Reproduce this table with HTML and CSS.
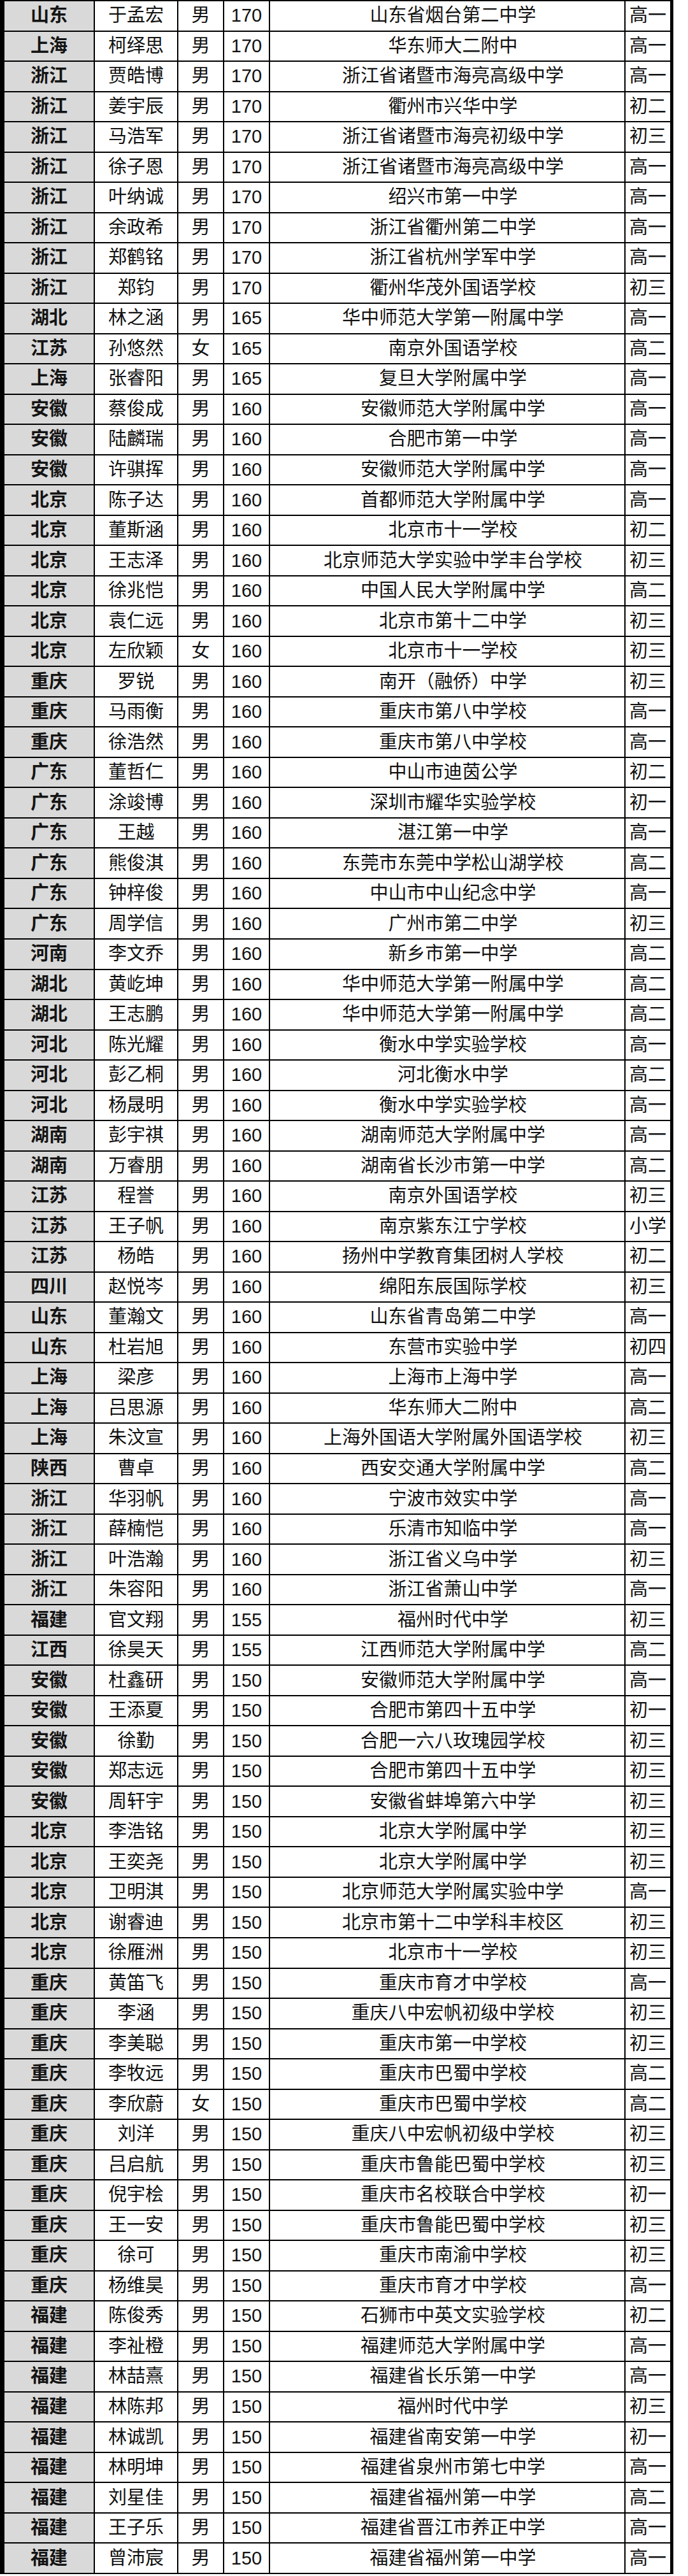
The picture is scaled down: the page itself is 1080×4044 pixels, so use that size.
FILE: index.html
```html
<!DOCTYPE html>
<html lang="zh-CN">
<head>
<meta charset="utf-8">
<title>名单</title>
<link rel="stylesheet" href="styles.css">
</head>
<body>
<div class="sheet">
<div class="row"><div class="c p">山东</div><div class="c">于孟宏</div><div class="c">男</div><div class="c">170</div><div class="c s">山东省烟台第二中学</div><div class="c">高一</div></div>
<div class="row"><div class="c p">上海</div><div class="c">柯绎思</div><div class="c">男</div><div class="c">170</div><div class="c s">华东师大二附中</div><div class="c">高一</div></div>
<div class="row"><div class="c p">浙江</div><div class="c">贾皓博</div><div class="c">男</div><div class="c">170</div><div class="c s">浙江省诸暨市海亮高级中学</div><div class="c">高一</div></div>
<div class="row"><div class="c p">浙江</div><div class="c">姜宇辰</div><div class="c">男</div><div class="c">170</div><div class="c s">衢州市兴华中学</div><div class="c">初二</div></div>
<div class="row"><div class="c p">浙江</div><div class="c">马浩军</div><div class="c">男</div><div class="c">170</div><div class="c s">浙江省诸暨市海亮初级中学</div><div class="c">初三</div></div>
<div class="row"><div class="c p">浙江</div><div class="c">徐子恩</div><div class="c">男</div><div class="c">170</div><div class="c s">浙江省诸暨市海亮高级中学</div><div class="c">高一</div></div>
<div class="row"><div class="c p">浙江</div><div class="c">叶纳诚</div><div class="c">男</div><div class="c">170</div><div class="c s">绍兴市第一中学</div><div class="c">高一</div></div>
<div class="row"><div class="c p">浙江</div><div class="c">余政希</div><div class="c">男</div><div class="c">170</div><div class="c s">浙江省衢州第二中学</div><div class="c">高一</div></div>
<div class="row"><div class="c p">浙江</div><div class="c">郑鹤铭</div><div class="c">男</div><div class="c">170</div><div class="c s">浙江省杭州学军中学</div><div class="c">高一</div></div>
<div class="row"><div class="c p">浙江</div><div class="c">郑钧</div><div class="c">男</div><div class="c">170</div><div class="c s">衢州华茂外国语学校</div><div class="c">初三</div></div>
<div class="row"><div class="c p">湖北</div><div class="c">林之涵</div><div class="c">男</div><div class="c">165</div><div class="c s">华中师范大学第一附属中学</div><div class="c">高一</div></div>
<div class="row"><div class="c p">江苏</div><div class="c">孙悠然</div><div class="c">女</div><div class="c">165</div><div class="c s">南京外国语学校</div><div class="c">高二</div></div>
<div class="row"><div class="c p">上海</div><div class="c">张睿阳</div><div class="c">男</div><div class="c">165</div><div class="c s">复旦大学附属中学</div><div class="c">高一</div></div>
<div class="row"><div class="c p">安徽</div><div class="c">蔡俊成</div><div class="c">男</div><div class="c">160</div><div class="c s">安徽师范大学附属中学</div><div class="c">高一</div></div>
<div class="row"><div class="c p">安徽</div><div class="c">陆麟瑞</div><div class="c">男</div><div class="c">160</div><div class="c s">合肥市第一中学</div><div class="c">高一</div></div>
<div class="row"><div class="c p">安徽</div><div class="c">许骐挥</div><div class="c">男</div><div class="c">160</div><div class="c s">安徽师范大学附属中学</div><div class="c">高一</div></div>
<div class="row"><div class="c p">北京</div><div class="c">陈子达</div><div class="c">男</div><div class="c">160</div><div class="c s">首都师范大学附属中学</div><div class="c">高一</div></div>
<div class="row"><div class="c p">北京</div><div class="c">董斯涵</div><div class="c">男</div><div class="c">160</div><div class="c s">北京市十一学校</div><div class="c">初二</div></div>
<div class="row"><div class="c p">北京</div><div class="c">王志泽</div><div class="c">男</div><div class="c">160</div><div class="c s">北京师范大学实验中学丰台学校</div><div class="c">初三</div></div>
<div class="row"><div class="c p">北京</div><div class="c">徐兆恺</div><div class="c">男</div><div class="c">160</div><div class="c s">中国人民大学附属中学</div><div class="c">高二</div></div>
<div class="row"><div class="c p">北京</div><div class="c">袁仁远</div><div class="c">男</div><div class="c">160</div><div class="c s">北京市第十二中学</div><div class="c">初三</div></div>
<div class="row"><div class="c p">北京</div><div class="c">左欣颖</div><div class="c">女</div><div class="c">160</div><div class="c s">北京市十一学校</div><div class="c">初三</div></div>
<div class="row"><div class="c p">重庆</div><div class="c">罗锐</div><div class="c">男</div><div class="c">160</div><div class="c s">南开（融侨）中学</div><div class="c">初三</div></div>
<div class="row"><div class="c p">重庆</div><div class="c">马雨衡</div><div class="c">男</div><div class="c">160</div><div class="c s">重庆市第八中学校</div><div class="c">高一</div></div>
<div class="row"><div class="c p">重庆</div><div class="c">徐浩然</div><div class="c">男</div><div class="c">160</div><div class="c s">重庆市第八中学校</div><div class="c">高一</div></div>
<div class="row"><div class="c p">广东</div><div class="c">董哲仁</div><div class="c">男</div><div class="c">160</div><div class="c s">中山市迪茵公学</div><div class="c">初二</div></div>
<div class="row"><div class="c p">广东</div><div class="c">涂竣博</div><div class="c">男</div><div class="c">160</div><div class="c s">深圳市耀华实验学校</div><div class="c">初一</div></div>
<div class="row"><div class="c p">广东</div><div class="c">王越</div><div class="c">男</div><div class="c">160</div><div class="c s">湛江第一中学</div><div class="c">高一</div></div>
<div class="row"><div class="c p">广东</div><div class="c">熊俊淇</div><div class="c">男</div><div class="c">160</div><div class="c s">东莞市东莞中学松山湖学校</div><div class="c">高二</div></div>
<div class="row"><div class="c p">广东</div><div class="c">钟梓俊</div><div class="c">男</div><div class="c">160</div><div class="c s">中山市中山纪念中学</div><div class="c">高一</div></div>
<div class="row"><div class="c p">广东</div><div class="c">周学信</div><div class="c">男</div><div class="c">160</div><div class="c s">广州市第二中学</div><div class="c">初三</div></div>
<div class="row"><div class="c p">河南</div><div class="c">李文乔</div><div class="c">男</div><div class="c">160</div><div class="c s">新乡市第一中学</div><div class="c">高二</div></div>
<div class="row"><div class="c p">湖北</div><div class="c">黄屹坤</div><div class="c">男</div><div class="c">160</div><div class="c s">华中师范大学第一附属中学</div><div class="c">高二</div></div>
<div class="row"><div class="c p">湖北</div><div class="c">王志鹏</div><div class="c">男</div><div class="c">160</div><div class="c s">华中师范大学第一附属中学</div><div class="c">高二</div></div>
<div class="row"><div class="c p">河北</div><div class="c">陈光耀</div><div class="c">男</div><div class="c">160</div><div class="c s">衡水中学实验学校</div><div class="c">高一</div></div>
<div class="row"><div class="c p">河北</div><div class="c">彭乙桐</div><div class="c">男</div><div class="c">160</div><div class="c s">河北衡水中学</div><div class="c">高二</div></div>
<div class="row"><div class="c p">河北</div><div class="c">杨晟明</div><div class="c">男</div><div class="c">160</div><div class="c s">衡水中学实验学校</div><div class="c">高一</div></div>
<div class="row"><div class="c p">湖南</div><div class="c">彭宇祺</div><div class="c">男</div><div class="c">160</div><div class="c s">湖南师范大学附属中学</div><div class="c">高一</div></div>
<div class="row"><div class="c p">湖南</div><div class="c">万睿朋</div><div class="c">男</div><div class="c">160</div><div class="c s">湖南省长沙市第一中学</div><div class="c">高二</div></div>
<div class="row"><div class="c p">江苏</div><div class="c">程誉</div><div class="c">男</div><div class="c">160</div><div class="c s">南京外国语学校</div><div class="c">初三</div></div>
<div class="row"><div class="c p">江苏</div><div class="c">王子帆</div><div class="c">男</div><div class="c">160</div><div class="c s">南京紫东江宁学校</div><div class="c">小学</div></div>
<div class="row"><div class="c p">江苏</div><div class="c">杨皓</div><div class="c">男</div><div class="c">160</div><div class="c s">扬州中学教育集团树人学校</div><div class="c">初二</div></div>
<div class="row"><div class="c p">四川</div><div class="c">赵悦岑</div><div class="c">男</div><div class="c">160</div><div class="c s">绵阳东辰国际学校</div><div class="c">初三</div></div>
<div class="row"><div class="c p">山东</div><div class="c">董瀚文</div><div class="c">男</div><div class="c">160</div><div class="c s">山东省青岛第二中学</div><div class="c">高一</div></div>
<div class="row"><div class="c p">山东</div><div class="c">杜岩旭</div><div class="c">男</div><div class="c">160</div><div class="c s">东营市实验中学</div><div class="c">初四</div></div>
<div class="row"><div class="c p">上海</div><div class="c">梁彦</div><div class="c">男</div><div class="c">160</div><div class="c s">上海市上海中学</div><div class="c">高一</div></div>
<div class="row"><div class="c p">上海</div><div class="c">吕思源</div><div class="c">男</div><div class="c">160</div><div class="c s">华东师大二附中</div><div class="c">高二</div></div>
<div class="row"><div class="c p">上海</div><div class="c">朱汶宣</div><div class="c">男</div><div class="c">160</div><div class="c s">上海外国语大学附属外国语学校</div><div class="c">初三</div></div>
<div class="row"><div class="c p">陕西</div><div class="c">曹卓</div><div class="c">男</div><div class="c">160</div><div class="c s">西安交通大学附属中学</div><div class="c">高二</div></div>
<div class="row"><div class="c p">浙江</div><div class="c">华羽帆</div><div class="c">男</div><div class="c">160</div><div class="c s">宁波市效实中学</div><div class="c">高一</div></div>
<div class="row"><div class="c p">浙江</div><div class="c">薛楠恺</div><div class="c">男</div><div class="c">160</div><div class="c s">乐清市知临中学</div><div class="c">高一</div></div>
<div class="row"><div class="c p">浙江</div><div class="c">叶浩瀚</div><div class="c">男</div><div class="c">160</div><div class="c s">浙江省义乌中学</div><div class="c">初三</div></div>
<div class="row"><div class="c p">浙江</div><div class="c">朱容阳</div><div class="c">男</div><div class="c">160</div><div class="c s">浙江省萧山中学</div><div class="c">高一</div></div>
<div class="row"><div class="c p">福建</div><div class="c">官文翔</div><div class="c">男</div><div class="c">155</div><div class="c s">福州时代中学</div><div class="c">初三</div></div>
<div class="row"><div class="c p">江西</div><div class="c">徐昊天</div><div class="c">男</div><div class="c">155</div><div class="c s">江西师范大学附属中学</div><div class="c">高二</div></div>
<div class="row"><div class="c p">安徽</div><div class="c">杜鑫研</div><div class="c">男</div><div class="c">150</div><div class="c s">安徽师范大学附属中学</div><div class="c">高一</div></div>
<div class="row"><div class="c p">安徽</div><div class="c">王添夏</div><div class="c">男</div><div class="c">150</div><div class="c s">合肥市第四十五中学</div><div class="c">初一</div></div>
<div class="row"><div class="c p">安徽</div><div class="c">徐勤</div><div class="c">男</div><div class="c">150</div><div class="c s">合肥一六八玫瑰园学校</div><div class="c">初三</div></div>
<div class="row"><div class="c p">安徽</div><div class="c">郑志远</div><div class="c">男</div><div class="c">150</div><div class="c s">合肥市第四十五中学</div><div class="c">初三</div></div>
<div class="row"><div class="c p">安徽</div><div class="c">周轩宇</div><div class="c">男</div><div class="c">150</div><div class="c s">安徽省蚌埠第六中学</div><div class="c">初三</div></div>
<div class="row"><div class="c p">北京</div><div class="c">李浩铭</div><div class="c">男</div><div class="c">150</div><div class="c s">北京大学附属中学</div><div class="c">初三</div></div>
<div class="row"><div class="c p">北京</div><div class="c">王奕尧</div><div class="c">男</div><div class="c">150</div><div class="c s">北京大学附属中学</div><div class="c">初三</div></div>
<div class="row"><div class="c p">北京</div><div class="c">卫明淇</div><div class="c">男</div><div class="c">150</div><div class="c s">北京师范大学附属实验中学</div><div class="c">高一</div></div>
<div class="row"><div class="c p">北京</div><div class="c">谢睿迪</div><div class="c">男</div><div class="c">150</div><div class="c s">北京市第十二中学科丰校区</div><div class="c">初三</div></div>
<div class="row"><div class="c p">北京</div><div class="c">徐雁洲</div><div class="c">男</div><div class="c">150</div><div class="c s">北京市十一学校</div><div class="c">初三</div></div>
<div class="row"><div class="c p">重庆</div><div class="c">黄笛飞</div><div class="c">男</div><div class="c">150</div><div class="c s">重庆市育才中学校</div><div class="c">高一</div></div>
<div class="row"><div class="c p">重庆</div><div class="c">李涵</div><div class="c">男</div><div class="c">150</div><div class="c s">重庆八中宏帆初级中学校</div><div class="c">初三</div></div>
<div class="row"><div class="c p">重庆</div><div class="c">李美聪</div><div class="c">男</div><div class="c">150</div><div class="c s">重庆市第一中学校</div><div class="c">初三</div></div>
<div class="row"><div class="c p">重庆</div><div class="c">李牧远</div><div class="c">男</div><div class="c">150</div><div class="c s">重庆市巴蜀中学校</div><div class="c">高二</div></div>
<div class="row"><div class="c p">重庆</div><div class="c">李欣蔚</div><div class="c">女</div><div class="c">150</div><div class="c s">重庆市巴蜀中学校</div><div class="c">高二</div></div>
<div class="row"><div class="c p">重庆</div><div class="c">刘洋</div><div class="c">男</div><div class="c">150</div><div class="c s">重庆八中宏帆初级中学校</div><div class="c">初三</div></div>
<div class="row"><div class="c p">重庆</div><div class="c">吕启航</div><div class="c">男</div><div class="c">150</div><div class="c s">重庆市鲁能巴蜀中学校</div><div class="c">初三</div></div>
<div class="row"><div class="c p">重庆</div><div class="c">倪宇桧</div><div class="c">男</div><div class="c">150</div><div class="c s">重庆市名校联合中学校</div><div class="c">初一</div></div>
<div class="row"><div class="c p">重庆</div><div class="c">王一安</div><div class="c">男</div><div class="c">150</div><div class="c s">重庆市鲁能巴蜀中学校</div><div class="c">初三</div></div>
<div class="row"><div class="c p">重庆</div><div class="c">徐可</div><div class="c">男</div><div class="c">150</div><div class="c s">重庆市南渝中学校</div><div class="c">初三</div></div>
<div class="row"><div class="c p">重庆</div><div class="c">杨维昊</div><div class="c">男</div><div class="c">150</div><div class="c s">重庆市育才中学校</div><div class="c">高一</div></div>
<div class="row"><div class="c p">福建</div><div class="c">陈俊秀</div><div class="c">男</div><div class="c">150</div><div class="c s">石狮市中英文实验学校</div><div class="c">初二</div></div>
<div class="row"><div class="c p">福建</div><div class="c">李祉橙</div><div class="c">男</div><div class="c">150</div><div class="c s">福建师范大学附属中学</div><div class="c">高一</div></div>
<div class="row"><div class="c p">福建</div><div class="c">林喆熹</div><div class="c">男</div><div class="c">150</div><div class="c s">福建省长乐第一中学</div><div class="c">高一</div></div>
<div class="row"><div class="c p">福建</div><div class="c">林陈邦</div><div class="c">男</div><div class="c">150</div><div class="c s">福州时代中学</div><div class="c">初三</div></div>
<div class="row"><div class="c p">福建</div><div class="c">林诚凯</div><div class="c">男</div><div class="c">150</div><div class="c s">福建省南安第一中学</div><div class="c">初一</div></div>
<div class="row"><div class="c p">福建</div><div class="c">林明坤</div><div class="c">男</div><div class="c">150</div><div class="c s">福建省泉州市第七中学</div><div class="c">高一</div></div>
<div class="row"><div class="c p">福建</div><div class="c">刘星佳</div><div class="c">男</div><div class="c">150</div><div class="c s">福建省福州第一中学</div><div class="c">高二</div></div>
<div class="row"><div class="c p">福建</div><div class="c">王子乐</div><div class="c">男</div><div class="c">150</div><div class="c s">福建省晋江市养正中学</div><div class="c">高一</div></div>
<div class="row"><div class="c p">福建</div><div class="c">曾沛宸</div><div class="c">男</div><div class="c">150</div><div class="c s">福建省福州第一中学</div><div class="c">高一</div></div>
</div>
</body>
</html>
```

FILE: styles.css
```css
html, body {
  margin: 0;
  padding: 0;
  background: #ffffff;
}

body {
  font-family: "Liberation Sans", "Noto Sans CJK SC", sans-serif;
  color: #111111;
}

.sheet {
  width: 1045px;
  display: flex;
  flex-direction: column;
  gap: 2px;
  background: #000000;
  border-left: 7px solid #000000;
  border-right: 5px solid #000000;
  border-top: 2px solid #000000;
  border-bottom: 2px solid #000000;
}

.row {
  display: grid;
  grid-template-columns: 140px 129px 70px 70px 556px 70px;
  column-gap: 2px;
  height: 45.52px;
}

.c {
  background: #ffffff;
  display: flex;
  align-items: center;
  justify-content: center;
  font-size: 29px;
  line-height: 1;
  white-space: nowrap;
  overflow: hidden;
}

.c.p {
  background: #d9d9d9;
  font-weight: bold;
  color: #141414;
}

.c.s {
  padding-left: 18px;
}
```
